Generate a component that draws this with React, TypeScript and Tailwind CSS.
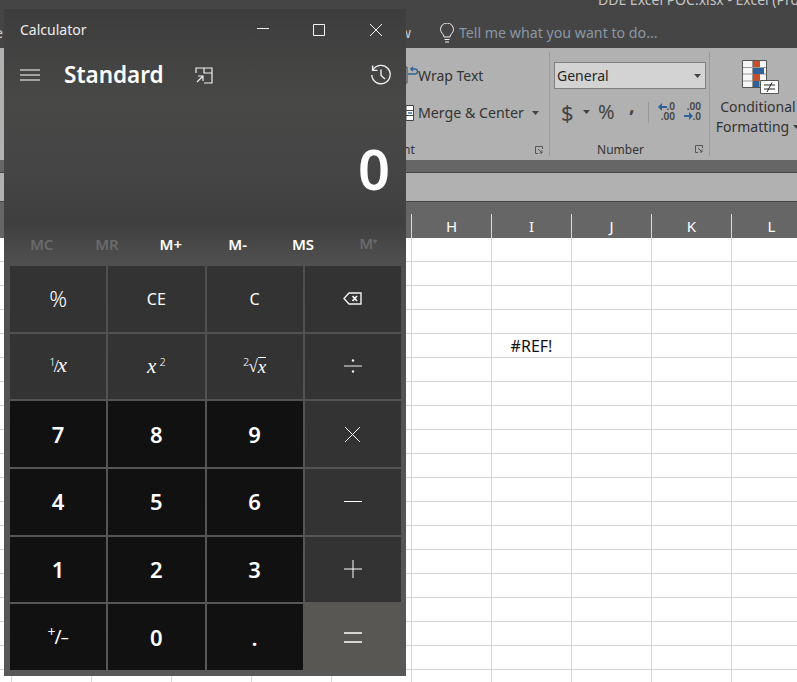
import { ReactNode } from "react";

const sansFont = "font-['Noto_Sans',sans-serif]";

function Line({ d, w = 20, h = 20, s = 1 }: { d: string; w?: number; h?: number; s?: number }) {
  return (
    <svg width={w} height={h} viewBox={`0 0 ${w} ${h}`} fill="none" stroke="currentColor" strokeWidth={s}>
      <path d={d} />
    </svg>
  );
}

function CalcButton({ kind, children }: { kind: "fn" | "num" | "eq"; children: ReactNode }) {
  const bg = kind === "num" ? "bg-[#111111] font-semibold" : kind === "eq" ? "bg-[#585754]" : "bg-[#333333] font-light";
  return (
    <div className={`flex items-center justify-center text-white text-[22px] ${bg}`}>{children}</div>
  );
}

function FractionKey() {
  return (
    <span className="flex items-baseline font-['Liberation_Serif',serif] text-[22px] -mt-1">
      <span className={`${sansFont} text-[11px] -translate-y-[6px]`}>1</span>
      <span className={`${sansFont} text-[16px] font-light -mx-[2px]`}>/</span>
      <i>x</i>
    </span>
  );
}

function SquareKey() {
  return (
    <span className="flex items-start font-['Liberation_Serif',serif] text-[21px] leading-none">
      <i>x</i>
      <span className={`${sansFont} text-[11px] ml-[3px]`}>2</span>
    </span>
  );
}

function RootKey() {
  return (
    <span className="flex items-start font-['Liberation_Serif',serif] text-[19px] leading-none">
      <span className={`${sansFont} text-[11px] -mr-[1px] -mt-[2px]`}>2</span>
      <span className="text-[17px]">√</span>
      <i className="border-t border-white leading-[17px] -mt-[1px]">x</i>
    </span>
  );
}

function CalculatorWindow() {
  return (
    <div
      className={`absolute left-[4px] top-[9px] w-[402px] h-[667px] flex flex-col text-white ${sansFont} bg-[linear-gradient(180deg,#3d3d3d_0%,#484847_14%,#454545_24%,#3f3f3f_32%,#4f4f4f_38%,#535353_60%,#585858_100%)]`}
    >
      <div className="h-[40px] flex items-center pl-[16px] text-[14px] text-[#eeeeee]">
        <span>Calculator</span>
        <div className="ml-auto flex items-center text-[#f2f2f2]">
          <div className="mr-[44px]"><Line w={12} h={12} d="M0 5.5H12" /></div>
          <div className="mr-[45px] mt-[2px]"><Line w={12} h={12} d="M.5.5H11.5V11.5H.5Z" /></div>
          <div className="mr-[24px] mt-[2px]"><Line w={12} h={12} d="M0 0L12 12M12 0L0 12" /></div>
        </div>
      </div>

      <div className="h-[54px] flex items-center pl-[16px]">
        <div className="-mt-[2px]"><Line w={20} h={12} d="M0 1H20M0 6H20M0 11H20" /></div>
        <span className="ml-[24px] text-[22.5px] font-semibold -mt-[2px]">Standard</span>
        <div className="ml-[31px] -mt-[2px]">
          <svg width="18" height="17" viewBox="0 0 18 17" fill="none" stroke="#f0f0f0" strokeWidth="1.2">
            <path d="M1 6V1H17V16H9M9 1V6H17" />
            <path d="M2 15L8 9M3 9H8V14" />
          </svg>
        </div>
        <div className="ml-auto mr-[14px] -mt-[2px]">
          <svg width="22" height="22" viewBox="0 0 22 22" fill="none" stroke="#f0f0f0" strokeWidth="1.4">
            <path d="M3 6A9.2 9.2 0 1 1 1.8 11" />
            <path d="M2.6 1.5V6.4H7.5M11 5.5V11.5L15 15" />
          </svg>
        </div>
      </div>

      <div className="h-[100px] flex items-end justify-end pr-[16px] text-[56px] leading-[70px] font-semibold">0</div>

      <div className="mt-[23px] h-[36px] ml-[5px] w-[392px] grid grid-cols-6 text-[15px] font-semibold items-center text-center">
        <span className="text-[#6a6a6a]">MC</span>
        <span className="text-[#6a6a6a]">MR</span>
        <span className="-ml-[3px]">M+</span>
        <span>M-</span>
        <span>MS</span>
        <span className="text-[#6a6a6a] -mt-[2px]">M<span className="text-[8px] align-[5px]">▾</span></span>
      </div>

      <div className="mt-[4px] ml-[6px] w-[391px] h-[404px] grid grid-cols-4 grid-rows-6 gap-[2px]">
        <CalcButton kind="fn">%</CalcButton>
        <CalcButton kind="fn"><span className="text-[16px] font-normal">CE</span></CalcButton>
        <CalcButton kind="fn"><span className="text-[16px] font-normal">C</span></CalcButton>
        <CalcButton kind="fn">
          <svg width="19" height="13" viewBox="0 0 19 13" fill="none" stroke="#f2f2f2" strokeWidth="1.4">
            <path d="M18 1V12H6L1 6.5L6 1Z" />
            <path d="M9.5 4L14 9M14 4L9.5 9" strokeWidth="1.8" />
          </svg>
        </CalcButton>

        <CalcButton kind="fn"><FractionKey /></CalcButton>
        <CalcButton kind="fn"><SquareKey /></CalcButton>
        <CalcButton kind="fn"><RootKey /></CalcButton>
        <CalcButton kind="fn">
          <svg width="18" height="14" viewBox="0 0 18 14" fill="none" stroke="#f2f2f2">
            <path d="M0 7H18" />
            <circle cx="9" cy="1.5" r="1.2" fill="#f2f2f2" stroke="none" />
            <circle cx="9" cy="12.5" r="1.2" fill="#f2f2f2" stroke="none" />
          </svg>
        </CalcButton>

        <CalcButton kind="num">7</CalcButton>
        <CalcButton kind="num">8</CalcButton>
        <CalcButton kind="num">9</CalcButton>
        <CalcButton kind="fn"><Line w={15} h={15} d="M0 0L15 15M15 0L0 15" /></CalcButton>

        <CalcButton kind="num">4</CalcButton>
        <CalcButton kind="num">5</CalcButton>
        <CalcButton kind="num">6</CalcButton>
        <CalcButton kind="fn"><Line w={18} h={4} d="M0 1.5H18" /></CalcButton>

        <CalcButton kind="num">1</CalcButton>
        <CalcButton kind="num">2</CalcButton>
        <CalcButton kind="num">3</CalcButton>
        <CalcButton kind="fn"><Line w={18} h={18} d="M0 9H18M9 0V18" /></CalcButton>

        <CalcButton kind="num">
          <span className="flex items-start font-normal text-[19px] leading-none">
            <span className="text-[14px] -mt-[3px]">+</span>
            <span className="-ml-[1px]">/</span>
            <span className="text-[16px] -ml-[1px] mt-[1px]">–</span>
          </span>
        </CalcButton>
        <CalcButton kind="num">0</CalcButton>
        <CalcButton kind="num">.</CalcButton>
        <CalcButton kind="eq"><Line w={18} h={11} d="M0 1H18M0 10H18" s={1.4} /></CalcButton>
      </div>
    </div>
  );
}

function Caret({ color = "#444444" }: { color?: string }) {
  return (
    <svg width="7" height="4" viewBox="0 0 7 4">
      <path d="M0 0H7L3.5 4Z" fill={color} />
    </svg>
  );
}

function DialogLauncher() {
  return (
    <svg width="8" height="8" viewBox="0 0 8 8" fill="none" stroke="#555555">
      <path d="M7.5 3V.5H.5V7.5H3" />
      <path d="M3 3L7 7M7 4.500V7H4.500" />
    </svg>
  );
}

function DecimalIcon({ top, bottom, flip }: { top: string; bottom: string; flip?: boolean }) {
  return (
    <div className="relative w-[17px] h-[20px] text-[10px] leading-[9px] font-semibold text-[#444444] flex flex-col items-end">
      <span>{top}</span>
      <span className="mt-[1px]">{bottom}</span>
      <svg
        className={`absolute left-0 ${flip ? "top-[10px]" : "top-[1px]"}`}
        width="9"
        height="8"
        viewBox="0 0 9 8"
        fill="#2f6299"
      >
        {flip ? <path d="M0 3H5V0L9 4L5 8V5H0Z" /> : <path d="M9 3H4V0L0 4L4 8V5H9Z" />}
      </svg>
    </div>
  );
}

function CondFormatIcon() {
  return (
    <svg width="37" height="35" viewBox="0 0 37 35">
      <path d="M.5 .5H24.500V27.500H.5Z" fill="#f6f6f6" stroke="#555555" />
      <path d="M10.500 1V27M24 7.500H1M24 14H1M24 21H1M17.500 1V27" stroke="#999999" fill="none" />
      <path d="M11 1H18V7H11ZM11 14H18V21H11Z" fill="#c5512b" />
      <path d="M11 8H22V14H11ZM11 21H17V27H11Z" fill="#2f6299" />
      <path d="M18.500 20.500H36.500V33.500H18.500Z" fill="#ffffff" stroke="#555555" />
      <path d="M22 25H33M22 29H33M30 22.500L25 32" stroke="#222222" fill="none" />
    </svg>
  );
}

function Ribbon() {
  return (
    <div className="h-[112px] bg-[#b1b1b1] flex text-[#333333]">
      <div className="w-[549px] h-[104px] mt-[4px] relative">
        <div className="flex flex-col pl-[406px] pt-[11px] text-[14px]">
          <div className="flex items-center h-[24px]">
            <svg width="12" height="18" viewBox="0 0 12 18" fill="none">
              <path d="M0 1H1V17H0" stroke="#444444" />
              <path d="M2 8H9A2 2 0 0 0 9 3H5M4.500 3L7 1M4.500 3L7 5" stroke="#2f6299" strokeWidth="1.400" />
            </svg>
            <span>Wrap Text</span>
          </div>
          <div className="flex items-center h-[24px] mt-[14px]">
            <svg width="12" height="16" viewBox="0 0 12 16" fill="#ffffff" stroke="#444444">
              <path d="M0 .5H7.500V15.500H0Z" />
              <path d="M0 5.500H7.500M0 10.500H7.500" />
              <path d="M2 8H6" stroke="#2f6299" strokeWidth="1.400" />
            </svg>
            <span className="text-[14.2px]">Merge &amp; Center</span>
            <span className="ml-[8px]"><Caret /></span>
          </div>
          <div className="flex items-center h-[16px] mt-[17px] text-[12px] -ml-[8px] mr-[6px]">
            <span className="ml-[5px]">nt</span>
            <span className="ml-auto"><DialogLauncher /></span>
          </div>
        </div>
      </div>

      <div className="w-[161px] h-[104px] mt-[4px] border-x border-[#9b9b9b] pl-[4px] flex flex-col">
        <div className="mt-[10px] shrink-0 w-[152px] h-[27px] border border-[#808080] bg-[#d3d3d3] flex items-center pl-[2px] pr-[4px] text-[14px] text-[#262626]">
          General
          <span className="ml-auto"><Caret /></span>
        </div>
        <div className="mt-[12px] shrink-0 h-[22px] flex items-center text-[#444444]">
          <span className="ml-[7px] text-[22px] w-[13px]">$</span>
          <span className="ml-[9px]"><Caret /></span>
          <span className="ml-[8px] text-[20px] w-[21px]">%</span>
          <span className="ml-[10px] w-[6px] text-[20px] font-bold -mt-[14px]">,</span>
          <span className="ml-[13px] w-px h-[21px] bg-[#999999]" />
          <span className="ml-[9px]"><DecimalIcon top=".0" bottom=".00" /></span>
          <span className="ml-[9px]"><DecimalIcon top=".00" bottom=".0" flip /></span>
        </div>
        <div className="relative mt-[18px] shrink-0 h-[18px] text-[12px] text-center pr-[22px]">
          Number
          <span className="absolute right-[6px] top-[4px]"><DialogLauncher /></span>
        </div>
      </div>

      <div className="flex-1 min-w-0 overflow-hidden">
        <div className="w-[90px] ml-[3px] flex flex-col items-center text-[14px] leading-[20px] mt-[12px]">
          <span className="ml-[4px]"><CondFormatIcon /></span>
          <span className="mt-[2px] whitespace-nowrap">Conditional</span>
          <span className="flex items-center whitespace-nowrap">Formatting<span className="ml-[4px]"><Caret /></span></span>
        </div>
      </div>
    </div>
  );
}

const columns = ["H", "I", "J", "K", "L"];
const rows = Array.from({ length: 19 }, (_, i) => i);
const cells = Array.from({ length: 10 }, (_, i) => i);

function Sheet() {
  return (
    <div className="flex-1 overflow-hidden bg-white">
      {rows.map((r) => (
        <div key={r} className="flex h-[24px] border-b border-[#d4d4d4]">
          <div className="w-[12px] shrink-0 border-r border-[#d4d4d4]" />
          {cells.map((c) => (
            <div
              key={c}
              className="w-[80px] shrink-0 border-r border-[#d4d4d4] text-center text-[16px] leading-[24px] text-[#111111]"
            >
              {r === 4 && c === 6 ? "#REF!" : ""}
            </div>
          ))}
        </div>
      ))}
    </div>
  );
}

export default function App() {
  return (
    <div className={`relative w-[797px] h-[682px] overflow-hidden ${sansFont}`}>
      <div className="flex flex-col h-full">
        <div className="relative h-[48px] bg-[#454545] overflow-hidden text-[14px]">
          <div className="absolute left-[598px] top-[-11px] text-[#c4c4c4] whitespace-nowrap">DDE Excel POC.xlsx - Excel (Product</div>
          <div className="flex items-center h-full pt-[17px] text-[#d0d0d0]">
            <span className="-ml-[5px]">e</span>
            <span className="ml-[397px]">w</span>
            <svg className="ml-[28px]" width="16" height="20" viewBox="0 0 16 20" fill="none" stroke="#f0f0f0">
              <path d="M5 14C5 11 1.500 10 1.500 6.500A6.500 6.500 0 0 1 14.500 6.500C14.500 10 11 11 11 14Z" />
              <path d="M5.500 16.500H10.500M6 19H10" />
            </svg>
            <span className="ml-[4px] text-[14.2px] text-[#8a97a3]">Tell me what you want to do...</span>
          </div>
        </div>
        <Ribbon />
        <div className="h-[12px] bg-[#666666]" />
        <div className="h-[30px] bg-[#b1b1b1] border-y border-[#444444]" />
        <div className="h-[36px] bg-[#666666] flex items-end shrink-0">
          <div className="w-[411px] shrink-0" />
          {columns.map((label) => (
            <div
              key={label}
              className="w-[80px] shrink-0 h-[24px] border-l border-[#d8d8d8] text-center text-[15px] leading-[24px] text-white"
            >
              {label}
            </div>
          ))}
        </div>
        <Sheet />
      </div>
      <CalculatorWindow />
    </div>
  );
}
